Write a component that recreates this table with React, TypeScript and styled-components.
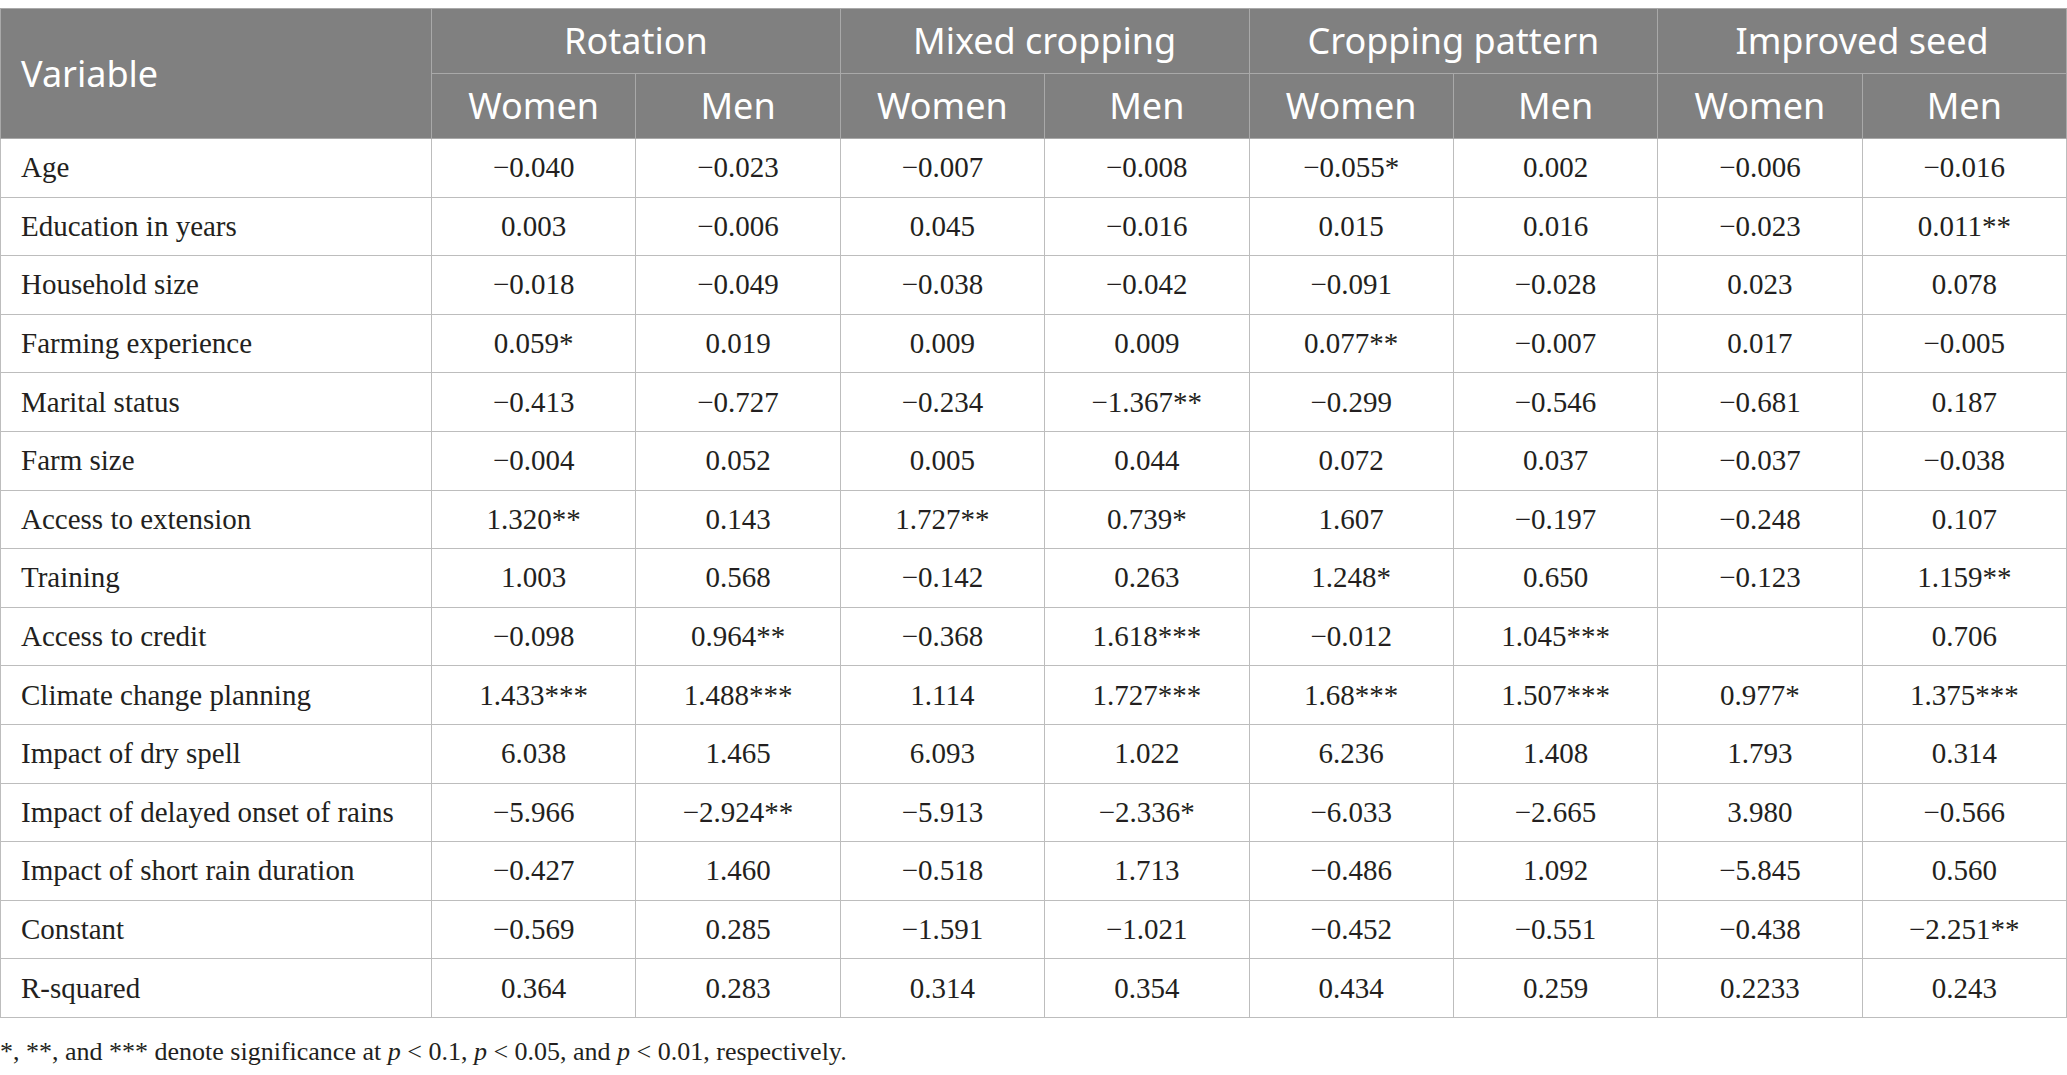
import React from 'react'
import styled, { createGlobalStyle } from 'styled-components'

const GlobalStyle = createGlobalStyle`
  html, body {
    margin: 0;
    padding: 0;
    background: #ffffff;
  }
`

const Page = styled.div`
  padding-top: 8px;
  width: 2067px;
`

const Table = styled.table`
  width: 2067px;
  border-collapse: collapse;
  table-layout: fixed;
  border: 1px solid #bdbdbd;
`

const HeadCell = styled.th<{ $first?: boolean }>`
  background: #808080;
  color: #ffffff;
  font-family: "Noto Sans", "Open Sans", sans-serif;
  font-weight: 400;
  font-size: 36px;
  height: 64px;
  padding: 0 20px;
  text-align: ${(p) => (p.$first ? 'left' : 'center')};
  border: 1px solid #a9a9a9;
  line-height: 1;
`

const Cell = styled.td<{ $label?: boolean }>`
  font-family: "Liberation Serif", "Times New Roman", serif;
  font-size: 29px;
  color: #231f20;
  height: 57.6px;
  padding: 0 20px;
  text-align: ${(p) => (p.$label ? 'left' : 'center')};
  border: 1px solid #bdbdbd;
  white-space: nowrap;
  line-height: 1;
`

const Footnote = styled.p`
  margin: 19px 0 0 0;
  font-family: "Liberation Serif", "Times New Roman", serif;
  font-size: 26px;
  color: #231f20;
  line-height: 30px;
`

const groups = ['Rotation', 'Mixed cropping', 'Cropping pattern', 'Improved seed']

const rows: [string, string[]][] = [
  ['Age', ['−0.040', '−0.023', '−0.007', '−0.008', '−0.055*', '0.002', '−0.006', '−0.016']],
  ['Education in years', ['0.003', '−0.006', '0.045', '−0.016', '0.015', '0.016', '−0.023', '0.011**']],
  ['Household size', ['−0.018', '−0.049', '−0.038', '−0.042', '−0.091', '−0.028', '0.023', '0.078']],
  ['Farming experience', ['0.059*', '0.019', '0.009', '0.009', '0.077**', '−0.007', '0.017', '−0.005']],
  ['Marital status', ['−0.413', '−0.727', '−0.234', '−1.367**', '−0.299', '−0.546', '−0.681', '0.187']],
  ['Farm size', ['−0.004', '0.052', '0.005', '0.044', '0.072', '0.037', '−0.037', '−0.038']],
  ['Access to extension', ['1.320**', '0.143', '1.727**', '0.739*', '1.607', '−0.197', '−0.248', '0.107']],
  ['Training', ['1.003', '0.568', '−0.142', '0.263', '1.248*', '0.650', '−0.123', '1.159**']],
  ['Access to credit', ['−0.098', '0.964**', '−0.368', '1.618***', '−0.012', '1.045***', '', '0.706']],
  ['Climate change planning', ['1.433***', '1.488***', '1.114', '1.727***', '1.68***', '1.507***', '0.977*', '1.375***']],
  ['Impact of dry spell', ['6.038', '1.465', '6.093', '1.022', '6.236', '1.408', '1.793', '0.314']],
  ['Impact of delayed onset of rains', ['−5.966', '−2.924**', '−5.913', '−2.336*', '−6.033', '−2.665', '3.980', '−0.566']],
  ['Impact of short rain duration', ['−0.427', '1.460', '−0.518', '1.713', '−0.486', '1.092', '−5.845', '0.560']],
  ['Constant', ['−0.569', '0.285', '−1.591', '−1.021', '−0.452', '−0.551', '−0.438', '−2.251**']],
  ['R-squared', ['0.364', '0.283', '0.314', '0.354', '0.434', '0.259', '0.2233', '0.243']],
]

export default function App(): React.ReactElement {
  return (
    <Page>
      <GlobalStyle />
      <Table>
        <colgroup>
          <col style={{ width: 431 }} />
          {_range(8).map((i) => <col key={i} />)}
        </colgroup>
        <thead>
          <tr>
            <HeadCell $first rowSpan={2}>Variable</HeadCell>
            {groups.map((g) => (
              <HeadCell key={g} colSpan={2}>{g}</HeadCell>
            ))}
          </tr>
          <tr>
            {groups.map((g) => (
              <React.Fragment key={g}>
                <HeadCell>Women</HeadCell>
                <HeadCell>Men</HeadCell>
              </React.Fragment>
            ))}
          </tr>
        </thead>
        <tbody>
          {rows.map(([label, values]) => (
            <tr key={label}>
              <Cell $label>{label}</Cell>
              {values.map((v, i) => (
                <Cell key={i}>{v}</Cell>
              ))}
            </tr>
          ))}
        </tbody>
      </Table>
      <Footnote>
        *, **, and *** denote significance at <i>p</i> &lt; 0.1, <i>p</i> &lt; 0.05, and <i>p</i> &lt; 0.01, respectively.
      </Footnote>
    </Page>
  )
}

function _range(n: number): number[] {
  return Array.from({ length: n }, (_, i) => i)
}
